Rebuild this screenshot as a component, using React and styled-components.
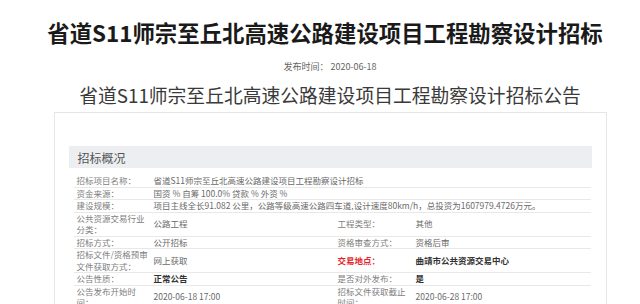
import React from "react";
import styled, { createGlobalStyle } from "styled-components";

const Global = createGlobalStyle`
  html, body { margin: 0; padding: 0; background: #fff; }
  body { font-family: "Noto Sans CJK SC", "Noto Sans", sans-serif; overflow: hidden; }
`;

const Page = styled.div`
  width: 620px;
  padding-left: 20px;
  display: flex;
  flex-direction: column;
  align-items: center;
`;

const Title = styled.h1`
  margin: 0;
  padding-top: 15px;
  margin-right: 10px;
  font-family: "Noto Sans CJK SC", sans-serif;
  font-size: 22.4px;
  line-height: 35px;
  font-weight: 700;
  color: #1a1a1a;
  white-space: nowrap;
`;

const PubDate = styled.div`
  margin-top: 11px;
  font-size: 9px;
  line-height: 12px;
  color: #666;
`;

const SubTitle = styled.h2`
  margin: 9px 0 0;
  font-size: 18.8px;
  line-height: 26px;
  font-weight: 400;
  color: #3a3a3a;
  white-space: nowrap;
`;

const Panel = styled.section`
  box-sizing: border-box;
  width: 553px;
  margin-top: 4px;
  border: 1px solid #e6e6e6;
  padding: 33px 14px 0 14px;
`;

const PanelHead = styled.div`
  height: 22px;
  background: #eceef1;
  display: flex;
  align-items: center;
  padding-left: 9px;
  font-size: 12px;
  color: #555;
`;

const Table = styled.table`
  margin: 7px 0 0 5px;
  width: 517px;
  border-collapse: collapse;
  table-layout: fixed;
  font-size: 8.5px;
  line-height: 11.5px;
`;

const Row = styled.tr`
  border-bottom: 1px solid #e8e8e8;
`;

const Label = styled.td`
  padding: 0 0 0 3px;
  vertical-align: middle;
  color: ${(p) => (p.$red ? "#e2262b" : "#808080")};
  font-weight: ${(p) => (p.$red ? 700 : 400)};
  white-space: nowrap;
`;

const Value = styled.td`
  padding: 0 0 0 3px;
  vertical-align: middle;
  color: ${(p) => (p.$bold ? "#333" : "#6a6a6a")};
  font-weight: ${(p) => (p.$bold ? 700 : 400)};
  white-space: nowrap;
`;

const rows = [
  { l1: "招标项目名称：", v1: "省道S11师宗至丘北高速公路建设项目工程勘察设计招标" },
  { l1: "资金来源：", v1: "国资 % 自筹 100.0% 贷款 % 外资 %" },
  {
    l1: "建设规模：",
    v1: "项目主线全长91.082 公里，公路等级高速公路四车道,设计速度80km/h，总投资为1607979.4726万元。",
  },
  { l1: ["公共资源交易行业", "分类："], v1: "公路工程", l2: "工程类型：", v2: "其他" },
  { l1: "招标方式：", v1: "公开招标", l2: "资格审查方式：", v2: "资格后审" },
  {
    l1: ["招标文件/资格预审", "文件获取方式："],
    v1: "网上获取",
    l2: "交易地点：",
    red: true,
    v2: "曲靖市公共资源交易中心",
    b2: true,
  },
  { l1: "公告性质：", v1: "正常公告", b1: true, l2: "是否对外发布：", v2: "是", b2: true },
  {
    l1: ["公告发布开始时", "间："],
    v1: "2020-06-18 17:00",
    l2: ["招标文件获取截止", "时间："],
    v2: "2020-06-28 17:00",
  },
];

const Lines = ({ text }) =>
  Array.isArray(text) ? (
    <>
      {text[0]}
      <br />
      {text[1]}
    </>
  ) : (
    text
  );

export default function App() {
  return (
    <>
      <Global />
      <Page>
        <Title>省道S11师宗至丘北高速公路建设项目工程勘察设计招标</Title>
        <PubDate>发布时间： 2020-06-18</PubDate>
        <SubTitle>省道S11师宗至丘北高速公路建设项目工程勘察设计招标公告</SubTitle>
        <Panel>
          <PanelHead>招标概况</PanelHead>
          <Table>
            <colgroup>
              <col style={{ width: 77 }} />
              <col style={{ width: 184 }} />
              <col style={{ width: 78 }} />
              <col style={{ width: 178 }} />
            </colgroup>
            <tbody>
              {rows.map((r, i) => (
                <Row key={i}>
                  <Label>
                    <Lines text={r.l1} />
                  </Label>
                  {r.l2 ? (
                    <>
                      <Value $bold={r.b1}>{r.v1}</Value>
                      <Label $red={r.red}>
                        <Lines text={r.l2} />
                      </Label>
                      <Value $bold={r.b2}>{r.v2}</Value>
                    </>
                  ) : (
                    <Value colSpan={3}>{r.v1}</Value>
                  )}
                </Row>
              ))}
            </tbody>
          </Table>
        </Panel>
      </Page>
    </>
  );
}
